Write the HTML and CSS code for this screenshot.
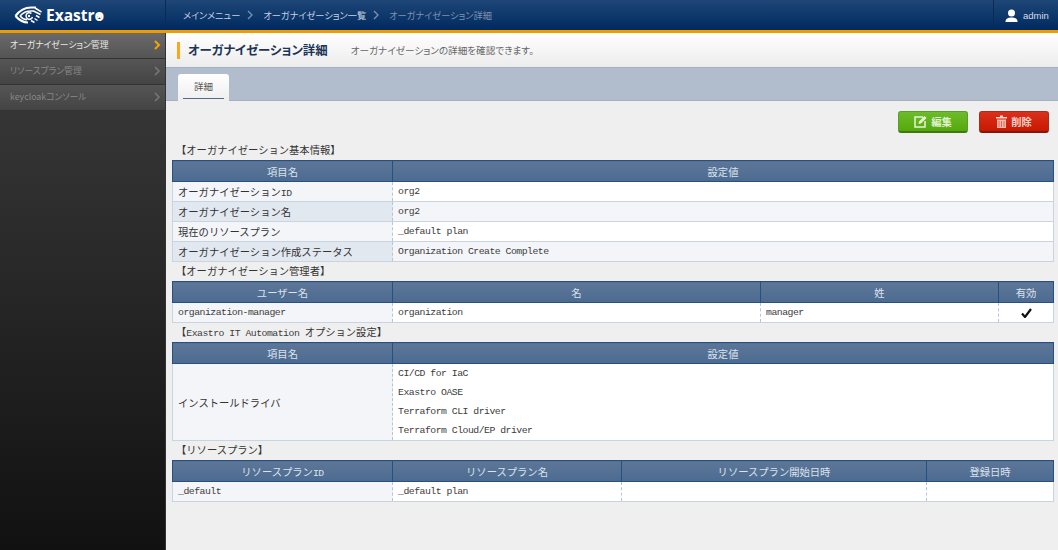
FILE: index.html
```html
<!DOCTYPE html>
<html lang="ja">
  <head>
    <meta charset="UTF-8" />
    <title>オーガナイゼーション詳細</title>
    <link rel="stylesheet" href="styles.css">
  </head>
  <body>
    <header class="topbar">
      <div class="logo">
        <svg class="logo-mark" width="29" height="18" viewBox="0 0 29 18">
          <g fill="none" stroke="#fff">
            <path d="M1.500 10 C6 4 11 1.500 17 1.500 L22 1.500" stroke-width="2.200"/>
            <path d="M1.500 10 C5 14 9 16.500 14 16.500" stroke-width="2.200"/>
            <path d="M6 10 C9 6.500 12.500 5 17 5 L20 5" stroke-width="1.600"/>
            <path d="M6 10 C8 12.500 10.500 13.500 13 13.800" stroke-width="1.600"/>
            <path d="M21 2 L27.500 6 M19.500 5 L26.500 8.500 M22 9.500 L25.500 11.500 M20.500 12.500 L23.500 14.500 M17 14.500 L20.500 16.500" stroke-width="1.500"/>
            <path d="M17.500 7.500 A3.300 3.300 0 1 0 18.500 11" stroke-width="1.500"/>
          </g>
          <circle cx="15" cy="10" r="1.200" fill="#fff"/>
        </svg>
        <span class="logo-text">Exastr<span class="logo-o">o<svg class="logo-star" width="7" height="7" viewBox="0 0 10 10"><path d="M5 0 L6.400 3.300 L10 3.700 L7.300 6 L8.100 9.600 L5 7.700 L1.900 9.600 L2.700 6 L0 3.700 L3.600 3.300 Z" fill="#fff"/></svg></span></span>
      </div>
      <nav class="crumbs">
        <span>メインメニュー</span>
        <svg class="chev" width="6" height="10" viewBox="0 0 6 10"><path d="M1 1 L5 5 L1 9" fill="none" stroke="#7f93b0" stroke-width="1.300"/></svg>
        <span>オーガナイゼーション一覧</span>
        <svg class="chev" width="6" height="10" viewBox="0 0 6 10"><path d="M1 1 L5 5 L1 9" fill="none" stroke="#7f93b0" stroke-width="1.300"/></svg>
        <span class="crumb-now">オーガナイゼーション詳細</span>
      </nav>
      <div class="user">
        <svg width="13" height="13" viewBox="0 0 13 13"><circle cx="6.500" cy="4" r="3.500" fill="#fff"/><path d="M0.500 13 C0.500 9.500 3 8.500 6.500 8.500 C10 8.500 12.500 9.500 12.500 13 Z" fill="#fff"/></svg>
        <span>admin</span>
      </div>
    </header>

    <div class="wrap">
      <aside class="side">
        <a class="side-item active">オーガナイゼーション管理
          <svg width="7" height="10" viewBox="0 0 7 10"><path d="M1 1 L5 5 L1 9" fill="none" stroke="#f5a300" stroke-width="2"/></svg>
        </a>
        <a class="side-item">リソースプラン管理
          <svg width="7" height="10" viewBox="0 0 7 10"><path d="M1 1 L5 5 L1 9" fill="none" stroke="#777" stroke-width="1.600"/></svg>
        </a>
        <a class="side-item">keycloakコンソール
          <svg width="7" height="10" viewBox="0 0 7 10"><path d="M1 1 L5 5 L1 9" fill="none" stroke="#777" stroke-width="1.600"/></svg>
        </a>
      </aside>

      <main class="main">
        <div class="title-bar">
          <h1>オーガナイゼーション詳細</h1>
          <p>オーガナイゼーションの詳細を確認できます。</p>
        </div>
        <div class="tabs">
          <div class="tab"><span>詳細</span></div>
        </div>

        <div class="content">
          <div class="actions">
            <button class="btn btn-edit">
              <svg width="13" height="13" viewBox="0 0 13 13"><path d="M9 2 H1 V12 H11 V6" fill="none" stroke="#e6f5d5" stroke-width="1.500"/><path d="M4.500 9 L5 6.500 L10.500 1 L12.500 3 L7 8.500 Z" fill="#e6f5d5"/></svg>
              編集
            </button>
            <button class="btn btn-del">
              <svg width="11" height="13" viewBox="0 0 11 13"><path d="M0 2 H4 V0.500 H7 V2 H11 V3.500 H0 Z" fill="#fbd8d0"/><path d="M1 4.500 H10 V13 H1 Z" fill="#f6b9ae"/><path d="M3 6 V12 M5.500 6 V12 M8 6 V12" stroke="#e0523c" stroke-width="0.800"/></svg>
              削除
            </button>
          </div>

          <h2 class="sec">【オーガナイゼーション基本情報】</h2>
          <table class="tbl">
            <colgroup><col class="c220"><col></colgroup>
            <tr><th>項目名</th><th>設定値</th></tr>
            <tr><td class="label">オーガナイゼーション<span class="mono">ID</span></td><td class="mono">org2</td></tr>
            <tr class="alt"><td class="label">オーガナイゼーション名</td><td class="mono">org2</td></tr>
            <tr><td class="label">現在のリソースプラン</td><td class="mono">_default plan</td></tr>
            <tr class="alt"><td class="label">オーガナイゼーション作成ステータス</td><td class="mono">Organization Create Complete</td></tr>
          </table>

          <h2 class="sec">【オーガナイゼーション管理者】</h2>
          <table class="tbl">
            <colgroup><col class="c220"><col class="c368"><col class="c238"><col></colgroup>
            <tr><th>ユーザー名</th><th>名</th><th>姓</th><th>有効</th></tr>
            <tr>
              <td class="mono first">organization-manager</td>
              <td class="mono">organization</td>
              <td class="mono">manager</td>
              <td class="check"><svg width="11" height="10" viewBox="0 0 11 10"><path d="M1 5.500 L4 9 L10 1" fill="none" stroke="#111" stroke-width="2.200"/></svg></td>
            </tr>
          </table>

          <h2 class="sec">【<span class="mono">Exastro IT Automation </span>オプション設定】</h2>
          <table class="tbl">
            <colgroup><col class="c220"><col></colgroup>
            <tr><th>項目名</th><th>設定値</th></tr>
            <tr>
              <td class="label">インストールドライバ</td>
              <td class="mono list">
                <div>CI/CD for IaC</div>
                <div>Exastro OASE</div>
                <div>Terraform CLI driver</div>
                <div>Terraform Cloud/EP driver</div>
              </td>
            </tr>
          </table>

          <h2 class="sec">【リソースプラン】</h2>
          <table class="tbl">
            <colgroup><col class="c220"><col class="c229"><col class="c305"><col></colgroup>
            <tr><th>リソースプラン<span class="mono">ID</span></th><th>リソースプラン名</th><th>リソースプラン開始日時</th><th>登録日時</th></tr>
            <tr>
              <td class="mono first">_default</td>
              <td class="mono">_default plan</td>
              <td></td>
              <td></td>
            </tr>
          </table>
        </div>
      </main>
    </div>
  </body>
</html>
```

FILE: styles.css
```css
html, body {
  margin: 0;
  padding: 0;
  height: 100%;
  overflow: hidden;
  background: #efefef;
  font-family: "Noto Sans CJK JP", "Liberation Sans", sans-serif;
  font-size: 10.3px;
  color: #333;
}

/* Header */
.topbar {
  display: flex;
  align-items: center;
  height: 30px;
  background: linear-gradient(#1e4677, #002a60);
  border-bottom: 3px solid #f09c00;
}

.logo {
  display: flex;
  align-items: center;
  gap: 3px;
  box-sizing: border-box;
  width: 166px;
  height: 30px;
  padding-left: 14px;
  border-right: 1px solid #0c2a55;
}

.logo-text {
  font-family: "Open Sans", sans-serif;
  font-size: 15.500px;
  font-weight: 700;
  color: #fff;
}

.logo-o {
  position: relative;
}

.logo-star {
  position: absolute;
  left: 1.500px;
  top: 7.500px;
}

.crumbs {
  display: flex;
  align-items: center;
  flex: 1;
  padding-left: 17px;
  font-size: 9.200px;
  font-feature-settings: "palt";
  color: #c6d2e2;
}

.chev {
  margin: 0 10px 0 7px;
}

.crumb-now {
  color: #7f93b0;
}

.user {
  display: flex;
  align-items: center;
  gap: 5px;
  box-sizing: border-box;
  width: 55px;
  height: 30px;
  margin-right: 10px;
  padding-left: 11px;
  border-left: 1px solid #0c2a55;
  font-family: "Liberation Sans", sans-serif;
  font-size: 9.500px;
  color: #d5deea;
}

.user svg {
  flex: none;
}

/* Layout */
.wrap {
  display: flex;
  height: 517px;
}

.side {
  flex: none;
  width: 166px;
  border-right: 1px solid #333;
  background: linear-gradient(#3c3c3c, #111);
  box-sizing: border-box;
}

.side-item {
  display: flex;
  align-items: center;
  justify-content: space-between;
  box-sizing: border-box;
  height: 26px;
  padding: 0 4px 2px 10px;
  background: linear-gradient(#555, #444);
  border-bottom: 1px solid #333;
  font-size: 8.800px;
  font-feature-settings: "palt";
  color: #888;
}

.side-item.active {
  background: linear-gradient(#6a6a6a, #545454);
  color: #e8e8e8;
}

.main {
  flex: 1;
  min-width: 0;
}

.title-bar {
  display: flex;
  align-items: center;
  box-sizing: border-box;
  height: 34px;
  padding-left: 11px;
  background: linear-gradient(#fff, #ececec);
}

.title-bar h1 {
  margin: 0;
  padding-left: 8px;
  border-left: 3px solid #f5a91c;
  font-size: 12.400px;
  font-weight: 700;
  font-feature-settings: "palt";
  line-height: 17px;
  color: #1c3557;
}

.title-bar p {
  margin: 0 0 0 23px;
  font-size: 9.600px;
  font-feature-settings: "palt";
  color: #666;
}

.tabs {
  box-sizing: border-box;
  height: 34px;
  padding: 6px 0 0 12px;
  background: #b1bccd;
  border-top: 1px solid #a5b0c2;
  border-bottom: 1px solid #a5b0c2;
}

.tab {
  box-sizing: border-box;
  width: 51px;
  height: 27px;
  padding: 0 5px;
  background: linear-gradient(#fff, #eee);
  border-radius: 3px 3px 0 0;
  text-align: center;
  font-size: 9.500px;
  color: #555;
}

.tab span {
  display: block;
  height: 24px;
  line-height: 25px;
  border-bottom: 1.500px solid #50698d;
}

/* Content */
.content {
  padding: 10px 4px 0 6px;
}

.actions {
  display: flex;
  justify-content: flex-end;
  gap: 11px;
  padding-right: 5px;
  margin-bottom: 8px;
}

.btn {
  display: flex;
  align-items: center;
  justify-content: center;
  gap: 4px;
  width: 70px;
  height: 22px;
  padding: 0;
  border-radius: 3px;
  font-family: inherit;
  font-size: 10.300px;
  font-weight: 700;
  cursor: pointer;
}

.btn-edit {
  background: linear-gradient(#6cbc2c, #55a80c);
  border: 1px solid #5c9a2a;
  border-bottom: 2px solid #3c7a10;
  color: #dff2cb;
}

.btn-del {
  background: linear-gradient(#d9301c, #c91800);
  border: 1px solid #a82c1c;
  border-bottom: 2px solid #84170a;
  color: #fbd2ca;
}

.sec {
  margin: 0;
  height: 19px;
  padding-left: 4px;
  font-size: 10.300px;
  font-weight: 400;
  line-height: 18px;
  color: #333;
}

.tbl {
  width: 882px;
  table-layout: fixed;
  border-collapse: collapse;
  background: #fff;
}

.c220 { width: 220px; }
.c229 { width: 229px; }
.c238 { width: 238px; }
.c305 { width: 305px; }
.c368 { width: 368px; }

.tbl th {
  height: 20px;
  padding: 0;
  background: linear-gradient(#5d7698, #4c6b91);
  border: 1px solid #28507f;
  font-size: 10.300px;
  font-weight: 400;
  color: #dbe3ed;
}

.tbl td {
  height: 19px;
  padding: 0 5px;
  border-top: 1px solid #c9d4e3;
  border-bottom: 1px solid #c9d4e3;
  border-left: 1px dashed #b5c4d8;
}

.tbl td:last-child {
  border-right: 1px solid #c9d4e3;
}

.tbl td.label,
.tbl td.first {
  background: #f3f5f8;
  border-left: 1px solid #c9d4e3;
}

.tbl .alt td {
  background: #f3f5f8;
}

.tbl .alt td.label {
  background: #e2e8f0;
}

.mono {
  font-family: "Liberation Mono", monospace;
  font-size: 9.800px;
  letter-spacing: -0.500px;
  color: #3c3c3c;
}

th .mono {
  color: inherit;
}

.tbl td.list {
  padding-top: 0;
  padding-bottom: 0;
}

.list div {
  height: 19px;
  line-height: 19px;
}

.tbl td.check {
  padding: 0;
  text-align: center;
}

.check svg {
  display: block;
  margin: 0 auto;
}
```
